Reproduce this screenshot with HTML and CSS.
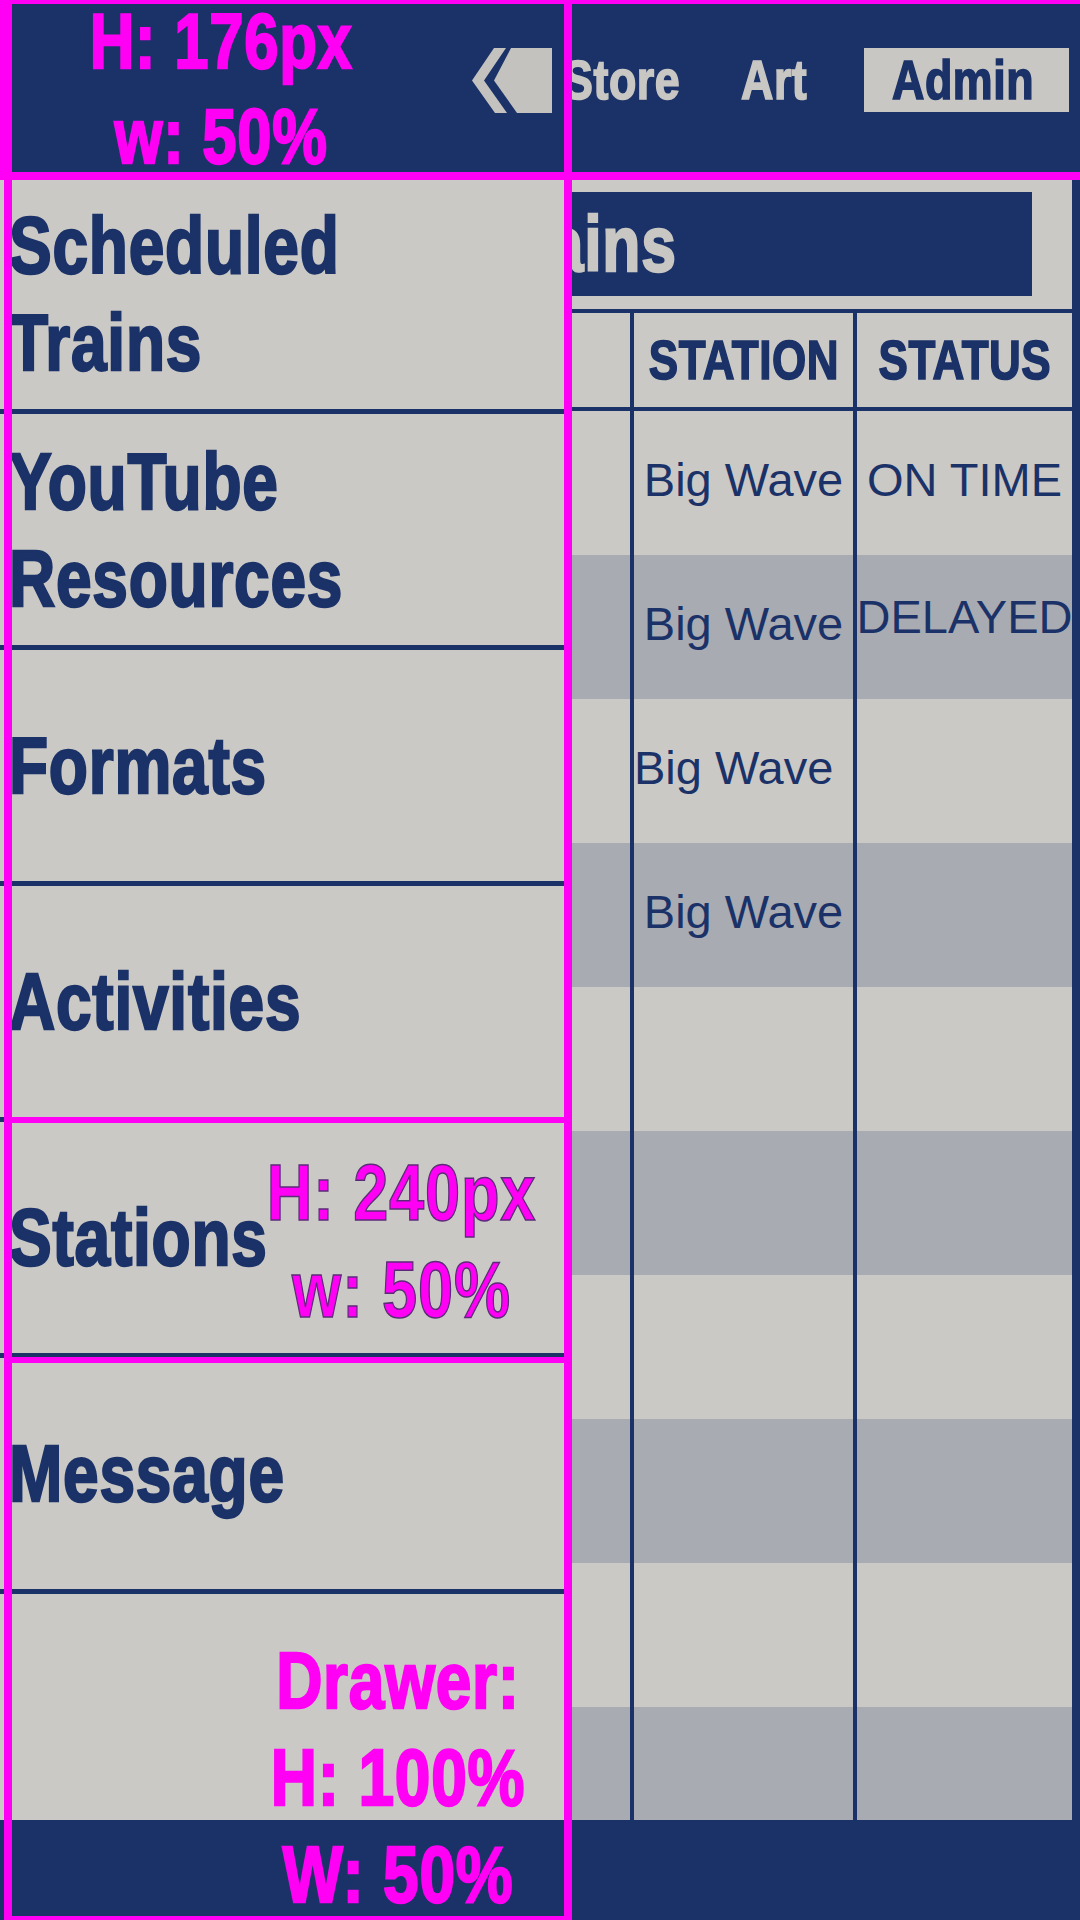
FILE: index.html
```html
<!DOCTYPE html>
<html lang="en">
<head>
<meta charset="utf-8">
<title>Scheduled Trains</title>
<link rel="stylesheet" href="styles.css">
</head>
<body>
<div class="page">
  <header class="topbar">
    <nav class="nav">
      <a class="nav-link nav-link--store"><span class="cond">Store</span></a>
      <a class="nav-link nav-link--art"><span class="cond">Art</span></a>
      <a class="nav-link nav-link--active"><span class="cond">Admin</span></a>
    </nav>
  </header>

  <main class="content">
    <h1 class="title-bar"><span class="cond">Scheduled Trains</span></h1>

    <div class="table">
      <div class="row row--head">
        <div class="cell cell--first"><span class="cond cond--mid">TRAIN</span></div>
        <div class="cell"><span class="cond cond--mid">STATION</span></div>
        <div class="cell"><span class="cond cond--mid">STATUS</span></div>
      </div>
      <div class="row">
        <div class="cell cell--first"></div>
        <div class="cell">Big Wave</div>
        <div class="cell">ON TIME</div>
      </div>
      <div class="row row--alt">
        <div class="cell cell--first"></div>
        <div class="cell">Big Wave</div>
        <div class="cell cell--up">DELAYED</div>
      </div>
      <div class="row">
        <div class="cell cell--first"></div>
        <div class="cell cell--left">Big Wave</div>
        <div class="cell"></div>
      </div>
      <div class="row row--alt">
        <div class="cell cell--first"></div>
        <div class="cell">Big Wave</div>
        <div class="cell"></div>
      </div>
      <div class="row"><div class="cell cell--first"></div><div class="cell"></div><div class="cell"></div></div>
      <div class="row row--alt"><div class="cell cell--first"></div><div class="cell"></div><div class="cell"></div></div>
      <div class="row"><div class="cell cell--first"></div><div class="cell"></div><div class="cell"></div></div>
      <div class="row row--alt"><div class="cell cell--first"></div><div class="cell"></div><div class="cell"></div></div>
      <div class="row"><div class="cell cell--first"></div><div class="cell"></div><div class="cell"></div></div>
      <div class="row row--alt"><div class="cell cell--first"></div><div class="cell"></div><div class="cell"></div></div>
    </div>
  </main>

  <footer class="footer"></footer>
</div>

<aside class="drawer">
  <div class="drawer-head">
    <button class="back-btn" aria-label="Close menu">
      <svg width="80" height="65" viewBox="0 0 80 65" aria-hidden="true">
        <polygon points="22,0 34,0 12,32.5 35,65 23,65 0,32.5" fill="#c4c2be"/>
        <polygon points="39,0 80,0 80,65 45,65 22,32.5" fill="#c4c2be"/>
      </svg>
    </button>
  </div>
  <ul class="menu">
    <li class="menu-item"><span class="cond">Scheduled<br>Trains</span></li>
    <li class="menu-item"><span class="cond">YouTube<br>Resources</span></li>
    <li class="menu-item"><span class="cond">Formats</span></li>
    <li class="menu-item"><span class="cond">Activities</span></li>
    <li class="menu-item"><span class="cond">Stations</span></li>
    <li class="menu-item"><span class="cond">Message</span></li>
    <li class="menu-item menu-item--empty"></li>
  </ul>
  <div class="drawer-foot"></div>
</aside>

<div class="annotations">
  <div class="ann-box ann-box--head-left">
    <div class="ann-label ann-label--head"><span class="cond cond--mid">H: 176px<br>w: 50%</span></div>
  </div>
  <div class="ann-box ann-box--head-right"></div>
  <div class="ann-box ann-box--drawer"></div>
  <div class="ann-box ann-box--stations"></div>
  <div class="ann-box ann-box--message"></div>
  <div class="ann-label ann-label--stations"><span class="cond cond--mid">H: 240px<br>w: 50%</span></div>
  <div class="ann-label ann-label--drawer"><span class="cond cond--mid">Drawer:<br>H: 100%<br>W: 50%</span></div>
</div>
</body>
</html>
```

FILE: styles.css
```css
* { box-sizing: border-box; }

html, body {
  margin: 0;
  padding: 0;
}

body {
  width: 1080px;
  height: 1920px;
  overflow: hidden;
  position: relative;
  background: #cbc9c5;
  color: #1b3268;
  font-family: "Liberation Sans", Arial, sans-serif;
}

/* condensed heavy display text (Helvetica Condensed Bold look) */
.cond {
  display: inline-block;
  font-family: "Liberation Sans", Arial, sans-serif;
  font-weight: 700;
  white-space: nowrap;
  letter-spacing: 0.012em;
  -webkit-text-stroke: 0.03em currentColor;
  transform: scaleX(0.8);
  transform-origin: 0 50%;
}

.cond--mid {
  text-align: center;
  transform-origin: 50% 50%;
}

.page {
  display: flex;
  flex-direction: column;
  height: 1920px;
}

/* ---------- top bar ---------- */
.topbar {
  height: 178px;
  flex: none;
  background: #1b3268;
}

.nav {
  display: flex;
  justify-content: flex-end;
  align-items: flex-start;
  padding: 48px 11px 0 0;
}

.nav-link {
  flex: none;
  display: block;
  height: 64px;
  font-size: 56px;
  line-height: 64px;
  color: #c9c7c3;
  text-decoration: none;
  white-space: nowrap;
}

.nav-link--store {
  width: 116px;
  margin-right: 62px;
}

.nav-link--art { width: 66px; }

.nav-link--active {
  width: 205px;
  margin-left: 57px;
  padding-left: 28px;
  background: #c9c7c3;
  color: #1b3268;
}

/* ---------- content ---------- */
.content {
  flex: 1;
  overflow: hidden;
  border-right: 8px solid #1b3268;
  padding-top: 14px;
}

.title-bar {
  margin: 0 40px;
  height: 104px;
  background: #1b3268;
  padding-left: 108px;
  font-size: 78px;
  font-weight: 700;
  line-height: 104px;
  color: #c9c7c3;
  white-space: nowrap;
}

.table {
  margin-top: 13px;
  border-top: 4px solid #1b3268;
}

.row {
  display: grid;
  grid-template-columns: 630px 223px 219px;
  height: 144px;
  background: #cbc9c5;
}

.row--alt { background: #a8abb2; }

.row--head {
  height: 98px;
  border-bottom: 4px solid #1b3268;
}

.cell {
  display: flex;
  align-items: center;
  justify-content: center;
  border-left: 4px solid #1b3268;
  white-space: nowrap;
  font-size: 47px;
  padding-bottom: 8px;
}

.cell--first { border-left: none; }

.cell--left { justify-content: flex-start; }
.cell--up { padding-bottom: 22px; }

.row--head .cell {
  font-size: 55px;
  padding-bottom: 0;
}

.footer {
  height: 100px;
  flex: none;
  background: #1b3268;
}

/* ---------- drawer ---------- */
.drawer {
  position: absolute;
  left: 0;
  top: 0;
  width: 570px;
  height: 1920px;
  display: flex;
  flex-direction: column;
  background: #cbc9c5;
  z-index: 5;
}

.drawer-head {
  height: 178px;
  flex: none;
  background: #1b3268;
  display: flex;
  justify-content: flex-end;
  align-items: flex-start;
  padding: 48px 18px 0 0;
}

.back-btn {
  border: 0;
  padding: 0;
  margin: 0;
  background: none;
  width: 80px;
  height: 65px;
  display: block;
}

.back-btn svg { display: block; }

.menu {
  list-style: none;
  margin: 0;
  padding: 0;
  flex: 1;
  display: flex;
  flex-direction: column;
  overflow: hidden;
}

.menu-item {
  height: 236px;
  flex: none;
  border-bottom: 5px solid #1b3268;
  display: flex;
  align-items: center;
  padding-left: 9px;
  font-size: 80px;
  line-height: 97px;
  color: #1b3268;
}

.menu-item--empty {
  flex: 1;
  border-bottom: none;
}

.drawer-foot {
  height: 100px;
  flex: none;
  background: #1b3268;
}

/* ---------- annotation overlay ---------- */
.annotations {
  position: absolute;
  inset: 0;
  z-index: 10;
  pointer-events: none;
}

.ann-box {
  position: absolute;
  border: 8px solid #ff00f5;
}

.ann-box--head-left {
  left: 0;
  top: -4px;
  width: 572px;
  height: 184px;
  border-left-width: 12px;
}

.ann-box--head-right {
  left: 564px;
  top: -4px;
  width: 524px;
  height: 184px;
}

.ann-box--drawer {
  left: 4px;
  top: 172px;
  width: 568px;
  height: 1752px;
}

.ann-box--stations {
  left: 4px;
  top: 1117px;
  width: 568px;
  height: 240px;
  border-width: 6px 8px 0 8px;
}

.ann-box--message {
  left: 4px;
  top: 1357px;
  width: 568px;
  height: 567px;
  border-width: 6px 8px 8px 8px;
}

.ann-label {
  position: absolute;
  display: flex;
  justify-content: center;
  color: #ff00f5;
}

.ann-label--head {
  left: -12px;
  top: -10px;
  width: 442px;
  font-size: 77px;
  line-height: 95px;
}

.ann-label--stations {
  left: 266px;
  top: 1144px;
  width: 270px;
  font-size: 79px;
  line-height: 97px;
}

.ann-label--stations .cond {
  -webkit-text-stroke: 1.5px #5b2a78;
}

.ann-label--drawer {
  left: 270px;
  top: 1632px;
  width: 256px;
  font-size: 80px;
  line-height: 97px;
}
```
